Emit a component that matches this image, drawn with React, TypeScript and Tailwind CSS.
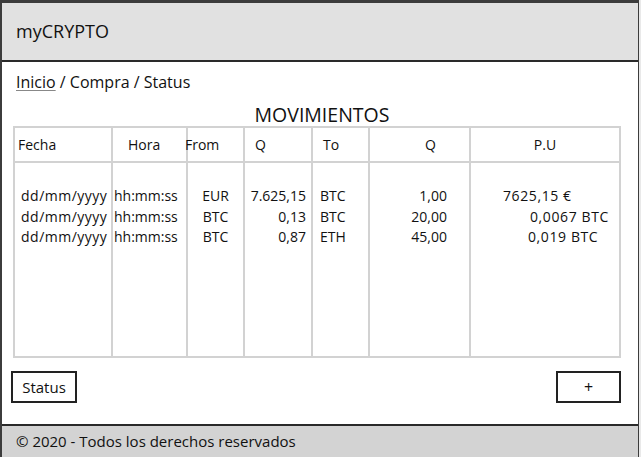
const rows = [
  { fecha: 'dd/mm/yyyy', hora: 'hh:mm:ss', from: 'EUR', qFrom: '7.625,15', to: 'BTC', qTo: '1,00', pu: '7625,15 €', puPad: 'pl-[32px] tracking-[0.6px]' },
  { fecha: 'dd/mm/yyyy', hora: 'hh:mm:ss', from: 'BTC', qFrom: '0,13', to: 'BTC', qTo: '20,00', pu: '0,0067 BTC', puPad: 'pl-[59px] tracking-[0.6px]' },
  { fecha: 'dd/mm/yyyy', hora: 'hh:mm:ss', from: 'BTC', qFrom: '0,87', to: 'ETH', qTo: '45,00', pu: '0,019 BTC', puPad: 'pl-[57px] tracking-[0.6px]' },
];

function Column({
  width,
  title,
  titleClass,
  cellClass,
  values,
  first,
}: {
  width: string;
  title: string;
  titleClass: string;
  cellClass: string | string[];
  values: string[];
  first?: boolean;
}) {
  return (
    <div className={`${width} flex flex-col ${first ? '' : 'border-l-2 border-[#d2d2d2]'}`}>
      <div className={`h-[35px] flex items-center border-b-2 border-[#d2d2d2] ${titleClass}`}>{title}</div>
      <div className="pt-[23px] leading-[20.5px]">
        {values.map((v, i) => (
          <div key={i} className={`whitespace-nowrap ${Array.isArray(cellClass) ? cellClass[i] : cellClass}`}>
            {v}
          </div>
        ))}
      </div>
    </div>
  );
}

export default function App() {
  return (
    <div className="w-[641px] h-[457px] bg-[#e9e9e9] pr-[2px]" style={{ fontFamily: '"Open Sans", sans-serif' }}>
      <div className="h-full flex flex-col bg-white border-t-[3px] border-l-2 border-r-[1px] border-[#3c3c3c] text-[#111]">
        <header className="h-[59px] shrink-0 bg-[#e1e1e1] border-b-2 border-[#2a2a2a] flex items-center px-[14px] text-[18px]">
          myCRYPTO
        </header>

        <main className="flex-1 flex flex-col">
          <div className="mt-[10px] px-[14px] h-[20px] flex items-center text-[16px]">
            <span className="underline decoration-[#888] underline-offset-2">Inicio</span>
            <span>&nbsp;/ Compra / Status</span>
          </div>

          <h1 className="mt-[12px] h-[22px] flex items-center justify-center text-[19.5px] ml-[4px]">MOVIMIENTOS</h1>

          <div className="ml-[11px] w-[608px] h-[232px] flex border-2 border-[#d2d2d2] text-[14px]">
            <Column first width="w-[96px]" title="Fecha" titleClass="pl-[3px]" cellClass="pl-[6px] tracking-[0.5px]" values={rows.map(r => r.fecha)} />
            <Column width="w-[75px]" title="Hora" titleClass="pl-[15px]" cellClass="pl-[1px]" values={rows.map(r => r.hora)} />
            <Column width="w-[57px]" title="From" titleClass="-ml-[3px]" cellClass="text-center" values={rows.map(r => r.from)} />
            <Column width="w-[68px]" title="Q" titleClass="pl-[10px]" cellClass="text-right pr-[5px]" values={rows.map(r => r.qFrom)} />
            <Column width="w-[57px]" title="To" titleClass="pl-[10px]" cellClass="pl-[7px]" values={rows.map(r => r.to)} />
            <Column width="w-[101px]" title="Q" titleClass="pl-[55px]" cellClass="text-right pr-[22px]" values={rows.map(r => r.qTo)} />
            <Column width="w-[150px]" title="P.U" titleClass="justify-center" cellClass={rows.map(r => r.puPad)} values={rows.map(r => r.pu)} />
          </div>

          <div className="mt-[13px] ml-[9px] w-[610px] flex justify-between">
            <button className="w-[66px] h-[32px] border-2 border-[#222] text-[15px] flex items-center justify-center bg-white">
              Status
            </button>
            <button className="w-[65px] h-[32px] border-2 border-[#222] text-[16px] flex items-center justify-center bg-white">
              +
            </button>
          </div>
        </main>

        <footer className="h-[33px] shrink-0 bg-[#d3d3d3] border-t-2 border-[#2a2a2a] flex items-center px-[14px] text-[15px]">
          © 2020 - Todos los derechos reservados
        </footer>
      </div>
    </div>
  );
}
